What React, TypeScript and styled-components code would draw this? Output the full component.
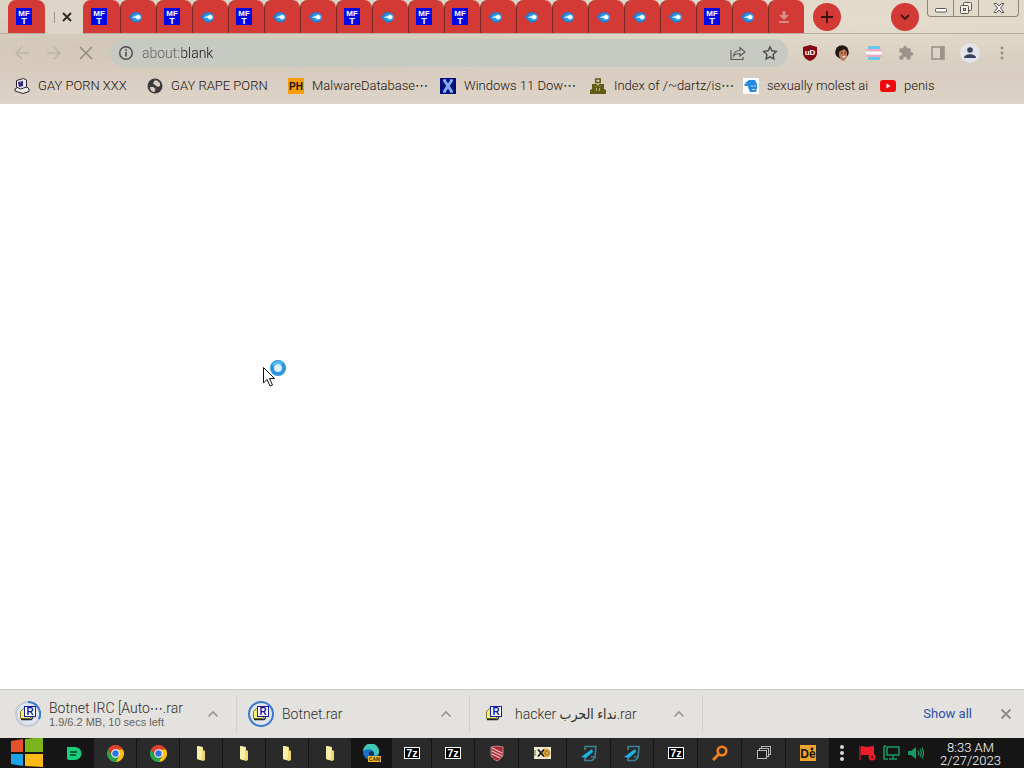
import React from "react";
import styled, { createGlobalStyle } from "styled-components";

const GlobalStyle = createGlobalStyle`
  * { box-sizing: border-box; }
  body { margin: 0; background: #fff; font-family: Roboto, "DejaVu Sans Condensed", sans-serif; }
  button { border: 0; padding: 0; margin: 0; background: none; font: inherit; color: inherit; }
  svg { display: block; flex: none; }
`;

const Desktop = styled.div`
  display: flex;
  flex-direction: column;
  min-height: 100vh;
`;

const Chrome = styled.header`
  background:
    radial-gradient(ellipse at 16% 45%, rgba(188, 170, 150, 0.25), transparent 40%),
    radial-gradient(ellipse at 85% 20%, rgba(240, 230, 214, 0.5), transparent 35%),
    linear-gradient(180deg, #dcd4c4 0%, #d9d0c2 50%, #d8cdc0 75%, #ddd4c8 100%);
`;

const TabStrip = styled.div`
  display: flex;
  align-items: flex-start;
  height: 34px;
  padding-left: 8px;
  border-bottom: 1px solid #b9ada0;
`;

const Tab = styled.button<{ $wide?: boolean }>`
  flex: 0 0 ${(p) => (p.$wide ? 37 : 36)}px;
  height: 33px;
  padding-left: 7px;
  display: flex;
  align-items: center;
  border-left: 1px solid ${(p) => (p.$wide ? "#d33a35" : "#7a2a22")};
  border-radius: 8px 8px 0 0;
  background: #d33a35;
`;

const ActiveTab = styled.div`
  flex: 0 0 38px;
  height: 34px;
  display: flex;
  align-items: center;
  gap: 6px;
  padding-left: 9px;
  border-radius: 8px 8px 0 0;
  background: #ddd5c7;
`;

const TabTitle = styled.span`
  width: 1px;
  height: 11px;
  background: #9c948a;
`;

const RoundButton = styled.button<{ $push?: boolean }>`
  width: 28px;
  height: 28px;
  margin-top: 3px;
  margin-left: ${(p) => (p.$push ? "auto" : "9px")};
  margin-right: ${(p) => (p.$push ? "8px" : "0")};
  border-radius: 50%;
  background: #d33a35;
  display: grid;
  place-items: center;
`;

const WindowControls = styled.div`
  display: flex;
  height: 17px;
  margin-right: 5px;
  border: 1px solid #8d857a;
  border-top: 0;
  border-radius: 0 0 4px 4px;
  background: #e2dacb;
`;

const WindowButton = styled.button<{ $close?: boolean }>`
  width: ${(p) => (p.$close ? 40 : 25)}px;
  display: grid;
  place-items: center;
  & + & { border-left: 1px solid #8d857a; }
`;

const Toolbar = styled.div`
  display: flex;
  align-items: center;
  height: 35px;
  padding: 2px 14px 0;
`;

const NavButton = styled.button`
  width: 16px;
  height: 16px;
  margin-right: 16px;
`;

const AddressBar = styled.label`
  flex: 1;
  display: flex;
  align-items: center;
  height: 28px;
  padding: 0 10px 0 8px;
  border-radius: 14px;
  background: #c7c9c3;
`;

const AddressInput = styled.input`
  flex: 1;
  min-width: 0;
  margin-left: 8px;
  padding: 0;
  border: 0;
  outline: 0;
  font: 300 14px/20px Roboto, sans-serif;
  background: linear-gradient(90deg, #5f5e5a 40px, #111 40px);
  background-clip: text;
  -webkit-background-clip: text;
  color: transparent;
`;

const AddressAction = styled.button`
  margin-left: 16px;
`;

const Extensions = styled.div`
  display: flex;
  align-items: center;
  gap: 12px;
  margin-left: 12px;
  margin-right: -2px;
`;

const ExtensionButton = styled.button`
  width: 20px;
  height: 20px;
  display: grid;
  place-items: center;
`;

const Avatar = styled(ExtensionButton)`
  border-radius: 50%;
  background: #e2e4ea;
`;

const Bookmarks = styled.nav`
  display: flex;
  align-items: center;
  gap: 16px;
  height: 35px;
  padding: 0 14px;
  border-bottom: 1px solid #dcd7d0;
`;

const Bookmark = styled.a<{ $w: number }>`
  flex: 0 1 ${(p) => p.$w}px;
  min-width: 0;
  display: flex;
  align-items: center;
  gap: 8px;
  font-size: 13px;
  font-weight: 300;
  line-height: 16px;
  white-space: nowrap;
  color: #1c120c;
  text-decoration: none;
`;

const Dots = styled.span`
  font-family: "DejaVu Sans", sans-serif;
  font-size: 13px;
  font-weight: 400;
  line-height: 1;
`;

const Page = styled.main`
  flex: 1;
  position: relative;
  background: #fff;
`;

const Pointer = styled.svg`
  position: absolute;
  left: 262px;
  top: 254px;
`;

const DownloadShelf = styled.section`
  display: flex;
  align-items: center;
  height: 49px;
  padding: 0 10px 0 4px;
  border-top: 1px solid #cccac6;
  background: #e4e2de;
  color: #2f2d2a;
`;

const Download = styled.div`
  flex: 0 1 233px;
  height: 38px;
  display: flex;
  align-items: center;
  gap: 8px;
  padding-left: 11px;
  padding-right: 17px;
  border-right: 1px solid #d2d0cc;
`;

const DownloadText = styled.div`
  flex: 1;
  min-width: 0;
  white-space: nowrap;
`;

const FileName = styled.div`
  font-size: 14px;
  font-weight: 300;
  line-height: 16px;
`;

const Status = styled.div`
  font: 11px/12px "Liberation Sans", sans-serif;
  color: #66645f;
`;

const ShowAll = styled.a`
  margin-left: auto;
  margin-right: 26px;
  font-size: 13px;
  line-height: 16px;
  color: #2c4fa8;
  text-decoration: none;
`;

const Taskbar = styled.footer`
  display: flex;
  height: 30px;
  background: #151515;
`;

const StartButton = styled.button`
  flex: 0 0 54px;
  padding-left: 10px;
`;

const TaskButton = styled.button<{ $w: number; $open?: boolean }>`
  flex: 0 1 ${(p) => p.$w}px;
  display: grid;
  place-items: center;
  background: ${(p) => (p.$open ? "#2a2a2a" : "transparent")};
  border-right: 1px solid ${(p) => (p.$open ? "#141414" : "transparent")};
`;

const Tray = styled.div`
  display: flex;
  align-items: center;
  gap: 7px;
  margin-left: 8px;
`;

const Overflow = styled.svg`
  margin-right: 5px;
`;

const Clock = styled.time`
  flex: 1;
  padding: 3px 7px 0 0;
  text-align: center;
  font-size: 13px;
  font-weight: 300;
  line-height: 13px;
  color: #fff;
`;

const Mark = styled.text`
  font-family: "Liberation Sans", sans-serif;
  font-weight: 700;
  text-anchor: middle;
`;

const MftIcon = () => (
  <svg width="16" height="17" viewBox="0 0 16 17">
    <rect width="16" height="17" fill="#0508e6" />
    <Mark x="8" y="8" fontSize="8" fill="#fff">MF</Mark>
    <Mark x="8" y="16" fontSize="9" fill="#fff">T</Mark>
  </svg>
);

const CometIcon = () => (
  <svg width="16" height="16" viewBox="0 0 16 16">
    <path d="M0 8C3 7 3 3 8 3a6 5.300 0 0 1 0 10.600C4 13.600 3 9 0 8z" fill="#2878cc" />
    <ellipse cx="9" cy="8.300" rx="5" ry="3.900" fill="#2f9cf0" />
    <path d="M3 8.300L8 7l2-1.500 2.500 1.500v2.500L10 10.500 8 9z" fill="#d9f1ff" />
    <circle cx="10" cy="8.200" r="2" fill="#fff" />
  </svg>
);

const DownloadTabIcon = () => (
  <svg width="16" height="16" viewBox="0 0 16 16">
    <path d="M6.500 2h3v4H13L8 11 3 6h3.500zM3 12h10v2H3z" fill="#d98d88" />
  </svg>
);

const DownloadIcon = ({ ring }: { ring: "partial" | "full" | "none" }) => (
  <svg width="26" height="26" viewBox="-13 -13 26 26">
    {ring !== "none" && <circle r="12" fill="#dfe6ef" stroke={ring === "full" ? "#3c78cf" : "#c3cad6"} strokeWidth="2" />}
    {ring === "partial" && <path d="M0 -12A12 12 0 0 1 11 5" fill="none" stroke="#3c78cf" strokeWidth="2" />}
    <path d="M-7.500 -2.500l3-3h8v8l-2 2h-9z" fill="#f3f07a" stroke="#77761c" />
    <path d="M-7 5.500H3l2-2" stroke="#222" strokeWidth="1.500" fill="none" />
    <rect x="-3.500" y="-7.500" width="11" height="10" fill="#fff" stroke="#1519a0" />
    <Mark x="2" y="1" fontSize="10" fill="#1519a0">R</Mark>
  </svg>
);

const Chevron = () => (
  <svg width="12" height="12" viewBox="0 0 12 12">
    <path d="M1.500 8.500L6 4l4.500 4.500" fill="none" stroke="#98968f" strokeWidth="1.600" />
  </svg>
);

const ChromeIcon = () => (
  <svg width="17" height="17" viewBox="0 0 48 48">
    <path d="M24 12H44.800A24 24 0 0 1 24 48L34.400 30z" fill="#fbc116" />
    <path d="M3.200 12A24 24 0 0 1 44.800 12H24L13.600 30z" fill="#e0402f" />
    <path d="M3.200 12L13.600 30L34.400 30L24 48A24 24 0 0 1 3.200 12z" fill="#2da24c" />
    <circle cx="24" cy="24" r="12" fill="#fff" />
    <circle cx="24" cy="24" r="9" fill="#2f6fe0" />
  </svg>
);

const FolderIcon = () => (
  <svg width="16" height="16" viewBox="0 0 16 16">
    <path d="M4 1l6 1v3l2 1v9l-2 1-6-2z" fill="#efd778" />
    <path d="M4 1l5 1v10l-1 3-4-1z" fill="#fbefaa" />
  </svg>
);

const SevenZipIcon = () => (
  <svg width="16" height="12" viewBox="0 0 16 12">
    <rect x="0.500" y="0.500" width="15" height="11" fill="#000" stroke="#fff" />
    <Mark x="8" y="10" fontSize="11" fill="#fff">7z</Mark>
  </svg>
);

const EdgeIcon = () => (
  <svg width="18" height="18" viewBox="0 0 18 18">
    <circle cx="8" cy="8" r="8" fill="#1673c8" />
    <path d="M0 7A8 8 0 0 1 16 8c0 3-3 4-5 3 2-4-5-8-11-4z" fill="#3fc8b4" />
    <path d="M6 11c-1-4 3-5 5-2l-1 3z" fill="#102b55" />
    <rect x="5" y="12" width="13" height="6" fill="#f3b92c" />
    <Mark x="11.500" y="17" fontSize="5" fill="#3a2a05">CAM</Mark>
  </svg>
);

const NotebookIcon = () => (
  <svg width="18" height="17" viewBox="0 0 18 17">
    <path d="M5 5V1.500h11L15 12.500l-3 3H5v-3" fill="none" stroke="#3d8496" strokeWidth="1.600" />
    <path d="M1 12l11-8 1 3-7 6z" fill="#1cb2e6" />
    <path d="M11 12h4" stroke="#3d8496" strokeWidth="1.400" />
  </svg>
);

const ShieldIcon = () => (
  <svg width="14" height="17" viewBox="0 0 14 17">
    <path d="M1 2l6-1 6 1v8c-1 3-4 5-6 6-2-1-5-3-6-6z" fill="#b02735" stroke="#b88" />
    <path d="M2 3l10 5M2 6l10 5M2 9l8 4" stroke="#e6c9c9" strokeWidth="1.200" />
  </svg>
);

const XoIcon = () => (
  <svg width="17" height="12" viewBox="0 0 17 12">
    <rect width="17" height="12" fill="#f1ead2" />
    <path d="M1 3v6" stroke="#9db58c" strokeWidth="2" />
    <circle cx="12" cy="6" r="4.500" fill="#e5a93b" />
    <path d="M4 2.500l6 7M10 2.500l-6 7" stroke="#222" strokeWidth="1.900" />
    <circle cx="13" cy="6" r="2" fill="none" stroke="#8c6522" />
  </svg>
);

const SearchIcon = () => (
  <svg width="16" height="16" viewBox="0 0 16 16">
    <circle cx="10" cy="6" r="4.300" fill="none" stroke="#f4801d" strokeWidth="2.600" />
    <path d="M7 9l-6 6" stroke="#f4801d" strokeWidth="3" />
  </svg>
);

const WindowsIcon = () => (
  <svg width="14" height="14" viewBox="0 0 14 14" fill="#222" stroke="#b9b9b9">
    <rect x="4.500" y="0.500" width="9" height="8" />
    <rect x="2.500" y="2.500" width="9" height="8" />
    <rect x="0.500" y="4.500" width="9" height="8" />
  </svg>
);

const DeIcon = () => (
  <svg width="16" height="16" viewBox="0 0 16 16">
    <rect width="16" height="16" fill="#f0a42c" />
    <Mark x="8" y="13" fontSize="12" fill="#171107">De</Mark>
    <circle cx="12" cy="4" r="1.400" fill="#171107" />
  </svg>
);

const BlobIcon = () => (
  <svg width="16" height="15" viewBox="0 0 16 15">
    <path d="M1 1h8a6.500 6.500 0 0 1 0 13H3a2 2 0 0 1-2-2z" fill="#18cf7c" />
    <path d="M4 6h7M4 9h6" stroke="#0e3d28" strokeWidth="1.400" />
  </svg>
);

const StartLogo = () => (
  <svg width="34" height="30" viewBox="0 0 34 30">
    <path d="M1 3l12-2v13H1z" fill="#e4512c" />
    <path d="M15 1l18-2v15H15z" fill="#7cb51b" />
    <path d="M1 16h12v12L1 26z" fill="#1ba3ea" />
    <path d="M15 16h18v13l-18-1z" fill="#fcb813" />
  </svg>
);

const ComputerIcon = () => (
  <svg width="16" height="16" viewBox="0 0 16 16">
    <path d="M1 11l3-2h9l2 2v2.500L9 15.500 1 13z" fill="#eee9e4" stroke="#292634" />
    <path d="M2.500 2.500l7-2 3 1.500v7l-6 2-4-2z" fill="#ece9ee" stroke="#292634" />
    <path d="M4 4l5-1v5l-4 1z" fill="#2a2480" />
    <path d="M5 5l2-.500v1z" fill="#aab4f0" />
  </svg>
);

const GlobeIcon = () => (
  <svg width="16" height="16" viewBox="0 0 16 16">
    <circle cx="8" cy="8" r="7.500" fill="#3d3a3b" />
    <path d="M3 9h3.500l2 2-1 3C5 14 3 12 3 9zM7.500 2.500L10 2.500l3 2.500v3l-2.500 1L8 7 6 5.500z" fill="#d8ccc0" />
  </svg>
);

const PhIcon = () => (
  <svg width="16" height="16" viewBox="0 0 16 16">
    <rect width="16" height="16" fill="#f99d0a" />
    <Mark x="8" y="12" fontSize="10" fill="#161005">PH</Mark>
  </svg>
);

const XIcon = () => (
  <svg width="16" height="16" viewBox="0 0 16 16">
    <rect width="16" height="16" fill="#06107c" />
    <path d="M4 2l8 12M12 2L4 14" stroke="#7fa9f3" strokeWidth="3" />
    <path d="M3 14h3M10 14h3M3 2h3M10 2h3" stroke="#a8c8fa" />
  </svg>
);

const PeopleIcon = () => (
  <svg width="16" height="16" viewBox="0 0 16 16">
    <rect x="5.700" y="1" width="4.500" height="3.500" fill="none" stroke="#5f5c13" strokeWidth="1.500" />
    <path d="M2 6h5l1 2 1-2h5v5l2 1v4H0v-4l2-1z" fill="#5f5c13" />
    <path d="M5.500 8.500h1M9.500 8.500h1M6.500 10v3M9.500 10v3" stroke="#b7ad73" />
  </svg>
);

const HeadIcon = () => (
  <svg width="16" height="16" viewBox="0 0 16 16">
    <rect width="16" height="16" fill="#f8fbff" />
    <path d="M2 5l4-3h6l2 4H4zM1 6h5v2H2z" fill="#2689dd" />
    <path d="M6 6h8v4l-1 4H7l-2-5z" fill="#2689dd" />
    <path d="M8 8h2M11 8h2M9 11.500h3" stroke="#bfe3ff" />
  </svg>
);

const YoutubeIcon = () => (
  <svg width="16" height="16" viewBox="0 0 16 16">
    <rect y="2" width="16" height="12" rx="3" fill="#ef0b0b" />
    <path d="M6.500 5.500v5l4-2.500z" fill="#fff" />
  </svg>
);

const bookmarks = [
  { text: "GAY PORN XXX", w: 117, cut: false, Icon: ComputerIcon },
  { text: "GAY RAPE PORN", w: 125, cut: false, Icon: GlobeIcon },
  { text: "MalwareDatabase", w: 136, cut: true, Icon: PhIcon },
  { text: "Windows 11 Dow", w: 134, cut: true, Icon: XIcon },
  { text: "Index of /~dartz/is", w: 137, cut: true, Icon: PeopleIcon },
  { text: "sexually molest ai", w: 121, cut: false, Icon: HeadIcon },
  { text: "penis", w: 54, cut: false, Icon: YoutubeIcon },
];

const tabIcons: Record<string, React.FC> = { m: MftIcon, c: CometIcon, d: DownloadTabIcon };
const tabs = "mcmcmccmcmmccccccmcd".split("");

const tasks: { name: string; w: number; open?: boolean; Icon: React.FC }[] = [
  { name: "Messages", w: 40, Icon: BlobIcon },
  { name: "Chrome", w: 43, open: true, Icon: ChromeIcon },
  { name: "Chrome window", w: 43, open: true, Icon: ChromeIcon },
  { name: "Folder 1", w: 43, open: true, Icon: FolderIcon },
  { name: "Folder 2", w: 43, open: true, Icon: FolderIcon },
  { name: "Folder 3", w: 43, open: true, Icon: FolderIcon },
  { name: "Folder 4", w: 43, open: true, Icon: FolderIcon },
  { name: "Edge", w: 40, Icon: EdgeIcon },
  { name: "7-Zip 1", w: 40, open: true, Icon: SevenZipIcon },
  { name: "7-Zip 2", w: 43, open: true, Icon: SevenZipIcon },
  { name: "Shield", w: 44, open: true, Icon: ShieldIcon },
  { name: "XO", w: 48, open: true, Icon: XoIcon },
  { name: "Notebook 1", w: 44, open: true, Icon: NotebookIcon },
  { name: "Notebook 2", w: 43, open: true, Icon: NotebookIcon },
  { name: "7-Zip 3", w: 44, open: true, Icon: SevenZipIcon },
  { name: "Search", w: 44, open: true, Icon: SearchIcon },
  { name: "Windows", w: 44, open: true, Icon: WindowsIcon },
  { name: "Debugger", w: 44, open: true, Icon: DeIcon },
];

export default function App() {
  return (
    <Desktop>
      <GlobalStyle />
      <Chrome>
        <TabStrip>
          <Tab $wide aria-label="Tab"><MftIcon /></Tab>
          <ActiveTab>
            <TabTitle />
            <button aria-label="Close tab">
              <svg width="12" height="12" viewBox="0 0 12 12"><path d="M2 2l8 8M10 2l-8 8" stroke="#2b2622" strokeWidth="1.800" /></svg>
            </button>
          </ActiveTab>
          {tabs.map((t, i) => {
            const Icon = tabIcons[t];
            return <Tab key={i} $wide={i === 0} aria-label="Tab"><Icon /></Tab>;
          })}
          <RoundButton aria-label="New tab">
            <svg width="14" height="14" viewBox="0 0 14 14"><path d="M7 1v12M1 7h12" stroke="#3a1210" strokeWidth="1.800" /></svg>
          </RoundButton>
          <RoundButton $push aria-label="Search tabs">
            <svg width="12" height="12" viewBox="0 0 12 12"><path d="M2 4l4 4 4-4" fill="none" stroke="#3a1210" strokeWidth="1.800" /></svg>
          </RoundButton>
          <WindowControls>
            <WindowButton aria-label="Minimize">
              <svg width="14" height="16" viewBox="0 0 14 16"><rect x="1.500" y="8.500" width="11" height="3.500" rx="1" fill="#fff" stroke="#5b564f" /></svg>
            </WindowButton>
            <WindowButton aria-label="Restore">
              <svg width="14" height="16" viewBox="0 0 14 16" fill="#f6f1e6" stroke="#5b564f"><rect x="4.500" y="2.500" width="8" height="8" rx="1" /><rect x="1.500" y="5.500" width="8" height="8" rx="1" /><rect x="4.500" y="8.500" width="2" height="2" /></svg>
            </WindowButton>
            <WindowButton $close aria-label="Close">
              <svg width="14" height="16" viewBox="0 0 14 16"><path d="M2 3.500h2.500L7 6l2.500-2.500H12L8.500 8l3.500 4.500H9.500L7 10l-2.500 2.500H2L5.500 8z" fill="#fff" stroke="#5b564f" /></svg>
            </WindowButton>
          </WindowControls>
        </TabStrip>

        <Toolbar>
          <NavButton aria-label="Back">
            <svg width="16" height="16" viewBox="0 0 16 16"><path d="M15 8H2M8 2L2 8l6 6" fill="none" stroke="#bdb3a8" strokeWidth="1.500" /></svg>
          </NavButton>
          <NavButton aria-label="Forward">
            <svg width="16" height="16" viewBox="0 0 16 16"><path d="M1 8h13M8 2l6 6-6 6" fill="none" stroke="#bdb3a8" strokeWidth="1.500" /></svg>
          </NavButton>
          <NavButton aria-label="Stop">
            <svg width="16" height="16" viewBox="0 0 16 16"><path d="M2 2l12 12M14 2L2 14" stroke="#93897f" strokeWidth="1.500" /></svg>
          </NavButton>
          <AddressBar>
            <svg width="16" height="16" viewBox="0 0 16 16"><circle cx="8" cy="8" r="6.300" fill="none" stroke="#4c4c4a" strokeWidth="1.400" /><path d="M8 7v4.500M8 4.300V6" stroke="#4c4c4a" strokeWidth="1.600" /></svg>
            <AddressInput aria-label="Address" defaultValue="about:blank" />
            <AddressAction aria-label="Share">
              <svg width="16" height="16" viewBox="0 0 16 16" fill="none" stroke="#5b5b58" strokeWidth="1.200"><path d="M1 5v9.500h12V12" /><path d="M3.500 11c.5-4 3-5.500 6.500-5.500V2.500l5 4.500-5 4V8.500c-3 0-5 .5-6.500 2.500z" /></svg>
            </AddressAction>
            <AddressAction aria-label="Bookmark this tab">
              <svg width="16" height="16" viewBox="0 0 16 16"><path d="M8 1.800l1.900 4 4.400.6-3.200 3.100.8 4.400L8 11.800l-3.900 2.100.8-4.400L1.700 6.400l4.400-.6z" fill="none" stroke="#4c4c4a" strokeWidth="1.400" /></svg>
            </AddressAction>
          </AddressBar>
          <Extensions>
            <ExtensionButton aria-label="uBlock">
              <svg width="16" height="16" viewBox="0 0 16 16"><path d="M8 0l7 2v7c-1 4-4 6-7 7-3-1-6-3-7-7V2z" fill="#840613" /><Mark x="8" y="10" fontSize="8" fill="#fff">uD</Mark></svg>
            </ExtensionButton>
            <ExtensionButton aria-label="Face">
              <svg width="16" height="16" viewBox="0 0 16 16"><circle cx="8" cy="7" r="6.800" fill="#241812" /><path d="M5 7l5-3 3 3v5l-3 4-3-1-2-4z" fill="#bd7b58" /><path d="M8 11.500l3.500-.5-1.500 2z" fill="#fff" /><path d="M7 8h1.500M10.500 8H12" stroke="#2b170f" /></svg>
            </ExtensionButton>
            <ExtensionButton aria-label="Flag">
              <svg width="16" height="16" viewBox="0 0 16 16"><path d="M2 1h12v3H2zM2 12h12v3H2z" fill="#69c7ea" /><path d="M0 4h16v2.500H0zM0 9.500h16V12H0z" fill="#eda9c4" /><path d="M0 6.500h16v3H0z" fill="#fff" /></svg>
            </ExtensionButton>
            <ExtensionButton aria-label="Extensions">
              <svg width="16" height="16" viewBox="0 0 24 24" fill="#9b948b"><path d="M20.500 11H19V7a2 2 0 0 0-2-2h-4V3.500a2.500 2.500 0 0 0-5 0V5H4a2 2 0 0 0-2 2v3.800h1.500a2.700 2.700 0 0 1 0 5.400H2V20a2 2 0 0 0 2 2h3.800v-1.500a2.700 2.700 0 0 1 5.400 0V22H17a2 2 0 0 0 2-2v-4h1.500a2.500 2.500 0 0 0 0-5z" /></svg>
            </ExtensionButton>
            <ExtensionButton aria-label="Side panel">
              <svg width="16" height="16" viewBox="0 0 16 16"><rect x="2" y="2" width="12" height="12" fill="none" stroke="#9b948b" strokeWidth="1.600" /><path d="M10 2h4v12h-4z" fill="#9b948b" /></svg>
            </ExtensionButton>
            <Avatar aria-label="Profile">
              <svg width="14" height="14" viewBox="0 0 14 14" fill="#37415e"><circle cx="7" cy="4" r="2.800" /><path d="M1 12c0-5 12-5 12 0z" /></svg>
            </Avatar>
            <ExtensionButton aria-label="Menu">
              <svg width="16" height="16" viewBox="0 0 16 16" fill="#968e85"><circle cx="8" cy="3" r="1.500" /><circle cx="8" cy="8" r="1.500" /><circle cx="8" cy="13" r="1.500" /></svg>
            </ExtensionButton>
          </Extensions>
        </Toolbar>

        <Bookmarks>
          {bookmarks.map(({ text, w, cut, Icon }) => (
            <Bookmark key={text} $w={w} href="#">
              <Icon />
              <span>{text}{cut && <Dots>⋯</Dots>}</span>
            </Bookmark>
          ))}
        </Bookmarks>
      </Chrome>

      <Page>
        <Pointer width="28" height="34" viewBox="0 0 28 34">
          <circle cx="16" cy="10" r="6" fill="#d9f0fd" stroke="#2b95e0" strokeWidth="4" />
          <path d="M11 7a6 6 0 0 1 9-1" fill="none" stroke="#59b7f2" strokeWidth="3" />
          <path d="M1.500 9.500v15.500l3.500-3.500 3 6.500 2.500-1-3-6.500h5z" fill="#fff" stroke="#111" />
        </Pointer>
      </Page>

      <DownloadShelf>
        <Download>
          <DownloadIcon ring="partial" />
          <DownloadText>
            <FileName>Botnet IRC [Auto<Dots>⋯</Dots>.rar</FileName>
            <Status>1.9/6.2 MB, 10 secs left</Status>
          </DownloadText>
          <button aria-label="Options"><Chevron /></button>
        </Download>
        <Download>
          <DownloadIcon ring="full" />
          <DownloadText><FileName>Botnet.rar</FileName></DownloadText>
          <button aria-label="Options"><Chevron /></button>
        </Download>
        <Download>
          <DownloadIcon ring="none" />
          <DownloadText><FileName>hacker نداء الحرب.rar</FileName></DownloadText>
          <button aria-label="Options"><Chevron /></button>
        </Download>
        <ShowAll href="#">Show all</ShowAll>
        <button aria-label="Close downloads">
          <svg width="16" height="16" viewBox="0 0 16 16"><path d="M3.500 3.500l9 9M12.500 3.500l-9 9" stroke="#8e8c87" strokeWidth="1.800" /></svg>
        </button>
      </DownloadShelf>

      <Taskbar>
        <StartButton aria-label="Start"><StartLogo /></StartButton>
        {tasks.map(({ name, w, open, Icon }) => (
          <TaskButton key={name} $w={w} $open={open} aria-label={name}><Icon /></TaskButton>
        ))}
        <Tray>
          <Overflow width="8" height="18" viewBox="0 0 8 18" fill="#d6d6d6"><circle cx="4" cy="3" r="2" /><circle cx="4" cy="9" r="2" /><circle cx="4" cy="15" r="2" /></Overflow>
          <svg width="18" height="16" viewBox="0 0 18 16"><path d="M2 1v14" stroke="#b01722" strokeWidth="1.600" /><path d="M3 1l6 1 7-1v9H3z" fill="#ee1c2b" /><circle cx="14" cy="12" r="3.500" fill="#ee1c2b" /><path d="M12.500 10.500l3 3M15.500 10.500l-3 3" stroke="#5c0a10" /></svg>
          <svg width="17" height="16" viewBox="0 0 17 16" fill="none" stroke="#149a62" strokeWidth="1.500"><path d="M4 2h12v8H4zM10 10v3M6 14h8M1 1v13h4M1 1h2" /></svg>
          <svg width="17" height="14" viewBox="0 0 17 14"><path d="M1 5h3l5-4v12L4 9H1z" fill="#149a62" /><path d="M11 4.500q1.500 2.500 0 5M13 3q2.500 4 0 8M15 1.500q3 5.500 0 11" fill="none" stroke="#149a62" strokeWidth="1.200" /></svg>
        </Tray>
        <Clock>8:33 AM<br />2/27/2023</Clock>
      </Taskbar>
    </Desktop>
  );
}
